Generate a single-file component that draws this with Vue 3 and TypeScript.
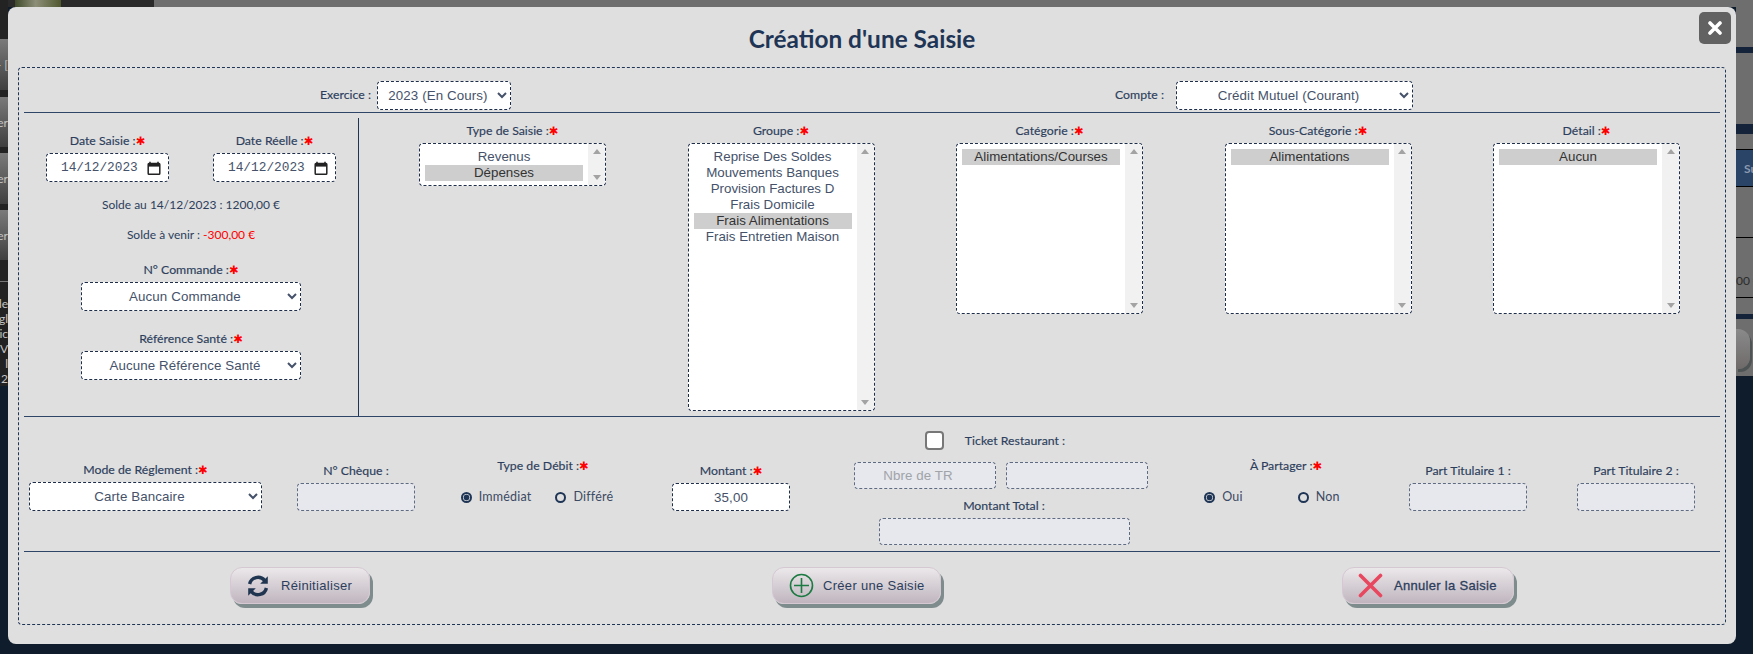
<script setup lang="ts">
interface ListBox {
  label: string;
  size: string;
  items: string[];
  selected: string;
}

const lists: ListBox[] = [
  { label: 'Type de Saisie :', size: 'small', items: ['Revenus', 'Dépenses'], selected: 'Dépenses' },
  {
    label: 'Groupe :',
    size: 'large',
    items: [
      'Reprise Des Soldes',
      'Mouvements Banques',
      'Provision Factures D',
      'Frais Domicile',
      'Frais Alimentations',
      'Frais Entretien Maison',
    ],
    selected: 'Frais Alimentations',
  },
  { label: 'Catégorie :', size: 'medium', items: ['Alimentations/Courses'], selected: 'Alimentations/Courses' },
  { label: 'Sous-Catégorie :', size: 'medium', items: ['Alimentations'], selected: 'Alimentations' },
  { label: 'Détail :', size: 'medium', items: ['Aucun'], selected: 'Aucun' },
];

const dates = ['Date Saisie :', 'Date Réelle :'];
</script>

<template>
  <div class="page">
    <div class="strip-left">
      <div class="sl-dark h39"></div>
      <div class="sl-grad h51"><span>- [</span></div>
      <div class="sl-dark h7"></div>
      <div class="sl-grad h50"><span>er</span></div>
      <div class="sl-dark h6"></div>
      <div class="sl-grad h51"><span>er</span></div>
      <div class="sl-dark h6"></div>
      <div class="sl-grad h50"><span>er</span></div>
      <div class="sl-text">
        <span>de</span><span>gl</span><span>ic</span><span>V</span><span>l</span><span>2</span>
      </div>
    </div>

    <div class="strip-top">
      <div class="st-dark"><div class="st-photo"></div></div>
      <div class="st-gray"></div>
    </div>

    <div class="strip-right">
      <div class="sr-gray h47"></div>
      <div class="sr-navy h6"></div>
      <div class="sr-gray h71"></div>
      <div class="sr-navy h10"></div>
      <div class="sr-gray h15"></div>
      <div class="sr-blue"><span>Su</span></div>
      <div class="sr-gray h50 line-bottom"></div>
      <div class="sr-gray sr-amount line-bottom"><span>00 €</span></div>
      <div class="sr-gray h16"></div>
      <div class="sr-navy h5"></div>
      <div class="sr-gray sr-btn-row"><div class="sr-btn"></div></div>
    </div>

    <div class="modal">
      <button class="close-button" type="button" aria-label="Fermer">
        <svg width="14" height="14" viewBox="0 0 14 14">
          <path d="M2 2 12 12M12 2 2 12" fill="none" stroke="#fff" stroke-width="3.6" stroke-linecap="round" />
        </svg>
      </button>
      <h1 class="title">Création d'une Saisie</h1>

      <form class="frame" @submit.prevent>
        <div class="row-top">
          <div class="inline-field exercice">
            <label>Exercice :</label>
            <select class="ctl sel-exercice">
              <option>2023 (En Cours)</option>
            </select>
          </div>
          <div class="inline-field compte">
            <label>Compte :</label>
            <select class="ctl sel-compte">
              <option>Crédit Mutuel (Courant)</option>
            </select>
          </div>
        </div>

        <div class="row-middle">
          <div class="left-col">
            <div class="dates">
              <div v-for="d in dates" :key="d" class="field">
                <label>{{ d }}<i class="req">✱</i></label>
                <div class="ctl date-input">
                  <span>14/12/2023</span>
                  <svg width="14" height="14" viewBox="0 0 14 14">
                    <path
                      d="M3 .8v2M11 .8v2M2 2.6h10a.8.8 0 0 1 .8.8v9a.8.8 0 0 1-.8.8H2a.8.8 0 0 1-.8-.8v-9a.8.8 0 0 1 .8-.8Z"
                      fill="none"
                      stroke="#222"
                      stroke-width="1.5"
                    />
                    <path d="M1.2 3h11.6v2.6H1.2z" fill="#222" />
                  </svg>
                </div>
              </div>
            </div>
            <p class="solde solde-date">Solde au 14/12/2023 : 1200,00 €</p>
            <p class="solde solde-venir">Solde à venir : <span class="negative">-300,00 €</span></p>
            <div class="field commande">
              <label>N° Commande :<i class="req">✱</i></label>
              <select class="ctl sel-left">
                <option>Aucun Commande</option>
              </select>
            </div>
            <div class="field reference">
              <label>Référence Santé :<i class="req">✱</i></label>
              <select class="ctl sel-left">
                <option>Aucune Référence Santé</option>
              </select>
            </div>
          </div>

          <div class="lists">
            <div v-for="list in lists" :key="list.label" class="field">
              <label class="list-label">{{ list.label }}<i class="req">✱</i></label>
              <div class="listbox" :class="list.size">
                <ul>
                  <li v-for="item in list.items" :key="item" :class="{ selected: item === list.selected }">
                    {{ item }}
                  </li>
                </ul>
                <div class="scrollbar">
                  <span class="arrow up"></span>
                  <span class="arrow down"></span>
                </div>
              </div>
            </div>
          </div>
        </div>

        <div class="row-bottom">
          <div class="field mode">
            <label>Mode de Réglement :<i class="req">✱</i></label>
            <select class="ctl sel-mode">
              <option>Carte Bancaire</option>
            </select>
          </div>
          <div class="field cheque">
            <label>N° Chèque :</label>
            <input class="ctl text-input off" type="text" disabled />
          </div>
          <div class="field debit">
            <label>Type de Débit :<i class="req">✱</i></label>
            <div class="radios">
              <label class="radio"><input type="radio" name="debit" checked />Immédiat</label>
              <label class="radio"><input type="radio" name="debit" />Différé</label>
            </div>
          </div>
          <div class="field montant">
            <label>Montant :<i class="req">✱</i></label>
            <input class="ctl text-input" type="text" value="35,00" />
          </div>
          <div class="ticket">
            <div class="ticket-head">
              <input class="check" type="checkbox" />
              <label>Ticket Restaurant :</label>
            </div>
            <div class="ticket-inputs">
              <input class="ctl text-input off nbre" type="text" placeholder="Nbre de TR" disabled />
              <input class="ctl text-input off" type="text" disabled />
            </div>
            <label class="total-label">Montant Total :</label>
            <input class="ctl text-input off total" type="text" disabled />
          </div>
          <div class="field partager">
            <label>À Partager :<i class="req">✱</i></label>
            <div class="radios">
              <label class="radio"><input type="radio" name="partage" checked />Oui</label>
              <label class="radio"><input type="radio" name="partage" />Non</label>
            </div>
          </div>
          <div class="field part part-1">
            <label>Part Titulaire 1 :</label>
            <input class="ctl text-input off" type="text" disabled />
          </div>
          <div class="field part part-2">
            <label>Part Titulaire 2 :</label>
            <input class="ctl text-input off" type="text" disabled />
          </div>
        </div>

        <div class="row-actions">
          <button class="action reset" type="button">
            <svg width="26" height="26" viewBox="0 0 26 26">
              <path
                d="M4.6 11A8.6 8.6 0 0 1 19.6 7.4M21.4 15A8.6 8.6 0 0 1 6.4 18.6"
                fill="none"
                stroke="#1f3550"
                stroke-width="3.4"
              />
              <path d="M22.8 3.2v7.6h-7.6zM3.2 22.8v-7.6h7.6z" fill="#1f3550" />
            </svg>
            <span>Réinitialiser</span>
          </button>
          <button class="action create" type="button">
            <svg width="25" height="25" viewBox="0 0 25 25">
              <circle cx="12.5" cy="12.5" r="11" fill="none" stroke="#1c7a43" stroke-width="1.6" />
              <path d="M12.5 5v15M5 12.5h15" fill="none" stroke="#1c7a43" stroke-width="1.6" />
            </svg>
            <span>Créer une Saisie</span>
          </button>
          <button class="action cancel" type="button">
            <svg width="25" height="25" viewBox="0 0 25 25">
              <path d="M2.5 2.5 22.5 22.5M22.5 2.5 2.5 22.5" fill="none" stroke="#e8485f" stroke-width="3.6" stroke-linecap="round" />
            </svg>
            <span>Annuler la Saisie</span>
          </button>
        </div>
      </form>
    </div>
  </div>
</template>

<style>
html,
body {
  margin: 0;
  background: #0f1c2c;
}
</style>

<style scoped>
.page {
  position: relative;
  display: flex;
  width: 1753px;
  height: 654px;
  overflow: hidden;
  background: #0f1c2c;
  font-family: Lato, 'Liberation Sans', sans-serif;
}

/* what shows round the modal */
.strip-left {
  width: 8px;
  display: flex;
  flex-direction: column;
  flex: none;
  overflow: hidden;
  font-size: 12px;
  color: #c4c4c4;
}
.strip-top {
  flex: 1;
  display: flex;
  height: 7px;
}
.st-dark {
  width: 139px;
  background: #2a2a2a;
  padding-left: 7px;
}
.st-photo {
  width: 46px;
  height: 7px;
  background: linear-gradient(90deg, #3f4a2b, #8d8f78 45%, #50582f);
}
.st-gray {
  flex: 1;
  background: #6e6e6e;
}
.strip-right {
  width: 17px;
  flex: none;
  display: flex;
  flex-direction: column;
  font-size: 12px;
  overflow: hidden;
}
.h5 { height: 5px; }
.h6 { height: 6px; }
.h7 { height: 7px; }
.h10 { height: 10px; }
.h15 { height: 15px; }
.h16 { height: 16px; }
.h39 { height: 39px; }
.h47 { height: 47px; }
.h50 { height: 50px; }
.h51 { height: 51px; }
.h71 { height: 71px; }
.sl-dark {
  background: #232323;
}
.sl-grad {
  display: flex;
  align-items: center;
  justify-content: flex-end;
  white-space: nowrap;
  background: linear-gradient(#7a7a7a, #3f3f3f);
}
.sl-text {
  height: 149px;
  padding-top: 36px;
  box-sizing: border-box;
  display: flex;
  flex-direction: column;
  align-items: flex-end;
  line-height: 15px;
  white-space: nowrap;
  background: linear-gradient(#232323 21px, #777 21px, #777 22px, #222 22px, #222 126px, #0f1c2c 126px);
}
.sr-gray {
  background: #6e6e6e;
}
.sr-navy {
  background: #14233a;
}
.sr-blue {
  height: 36px;
  display: flex;
  align-items: center;
  padding-left: 8px;
  background: #2a4468;
  border-top: 1px solid #000;
  border-bottom: 1px solid #000;
  font-weight: 700;
  color: #8c9ab0;
}
.line-bottom {
  border-bottom: 1px solid #000;
}
.sr-amount {
  height: 60px;
  padding-top: 35px;
  box-sizing: border-box;
  white-space: nowrap;
  color: #2b2b2b;
}
.sr-btn-row {
  height: 57px;
  padding-top: 10px;
  box-sizing: border-box;
}
.sr-btn {
  width: 14px;
  height: 40px;
  border-radius: 0 12px 12px 0;
  background: linear-gradient(#8a8a8a, #6f6a6a);
  box-shadow: 2px 3px 0 #4e5353;
}

.modal {
  position: absolute;
  left: 8px;
  top: 7px;
  width: 1728px;
  height: 637px;
  box-sizing: border-box;
  padding: 0 10px 19px;
  border-radius: 8px;
  background: #dfdfdf;
  color: #2c3e5c;
}
.close-button {
  position: absolute;
  right: 5px;
  top: 5px;
  width: 32px;
  height: 32px;
  padding: 0;
  display: flex;
  align-items: center;
  justify-content: center;
  border: 0;
  border-radius: 5px;
  background: #626262;
}
.title {
  margin: 0;
  height: 60px;
  box-sizing: border-box;
  padding: 16px 20px 0 0;
  text-align: center;
  font-size: 24.4px;
  line-height: 32px;
  font-weight: 700;
  color: #1f3556;
}
.frame {
  height: 558px;
  box-sizing: border-box;
  padding: 0 5px;
  border: 1px dashed #1f3556;
  border-radius: 4px;
}

label {
  font-size: 12.3px;
  line-height: 14px;
  color: #2c3e5c;
  white-space: nowrap;
  -webkit-text-stroke: 0.15px #2c3e5c;
}
.req {
  font-family: 'DejaVu Sans', sans-serif;
  font-style: normal;
  font-size: 11.5px;
  line-height: 0;
  font-weight: 700;
  color: #f00;
  -webkit-text-stroke: 0;
}
.field {
  display: flex;
  flex-direction: column;
  align-items: center;
}

.ctl {
  box-sizing: border-box;
  height: 29px;
  border: 1px dashed #1d2d4a;
  border-radius: 4px;
  background: #fff;
  font-family: 'Liberation Sans', sans-serif;
  font-size: 13.33px;
  letter-spacing: 0.1px;
  color: #45526a;
  text-align: center;
  text-align-last: center;
  outline: none;
}

.row-top {
  display: flex;
  align-items: center;
  height: 45px;
  box-sizing: border-box;
  padding-top: 10px;
  border-bottom: 1px solid #2f4567;
}
.inline-field {
  display: flex;
  align-items: center;
}
.exercice {
  margin-left: 296px;
  gap: 6px;
}
.compte {
  margin-left: 604px;
  gap: 12px;
}
.sel-exercice {
  width: 134px;
}
.sel-compte {
  width: 237px;
}

.row-middle {
  display: flex;
  height: 304px;
  box-sizing: border-box;
  border-bottom: 1px solid #2f4567;
}
.left-col {
  width: 335px;
  margin-top: 5px;
  box-sizing: border-box;
  border-right: 1px solid #1f3556;
  display: flex;
  flex-direction: column;
  align-items: center;
  padding-top: 16px;
}
.dates {
  display: flex;
  gap: 44px;
}
.dates .field {
  gap: 5px;
}
.date-input {
  width: 123px;
  display: flex;
  align-items: center;
  justify-content: space-between;
  padding: 0 7px 0 14px;
  font-family: 'Liberation Mono', monospace;
  font-size: 12.8px;
  letter-spacing: 0;
}
.solde {
  margin: 0;
  font-size: 12px;
  line-height: 14px;
}
.solde-date {
  margin-top: 16px;
}
.solde-venir {
  margin-top: 16px;
}
.negative {
  color: #f00;
}
.commande {
  margin-top: 21px;
  gap: 5px;
}
.reference {
  margin-top: 21px;
  gap: 5px;
}
.sel-left {
  width: 220px;
}

.lists {
  flex: 1;
  display: flex;
  justify-content: space-between;
  align-items: flex-start;
  padding: 11px 40px 0 60px;
}
.list-label {
  margin-bottom: 5px;
}
.listbox {
  box-sizing: border-box;
  width: 187px;
  display: flex;
  border: 1px dashed #1d2d4a;
  border-radius: 4px;
  background: #fff;
}
.listbox.small {
  height: 43px;
}
.listbox.medium {
  height: 171px;
}
.listbox.large {
  height: 268px;
}
.listbox ul {
  flex: 1;
  margin: 0;
  padding: 5px;
  list-style: none;
  font-family: 'Liberation Sans', sans-serif;
  font-size: 13.33px;
  line-height: 16px;
  text-align: center;
  color: #45526a;
}
.listbox li.selected {
  background: #cecece;
  color: #333;
}
.scrollbar {
  width: 17px;
  display: flex;
  flex-direction: column;
  justify-content: space-between;
  align-items: center;
  padding: 5px 0;
  box-sizing: border-box;
  background: #f1f1f1;
  border-radius: 0 4px 4px 0;
}
.arrow {
  width: 0;
  height: 0;
  border-left: 4px solid transparent;
  border-right: 4px solid transparent;
}
.arrow.up {
  border-bottom: 5px solid #a3a3a3;
}
.arrow.down {
  border-top: 5px solid #a3a3a3;
}

.row-bottom {
  display: flex;
  align-items: flex-start;
  height: 135px;
  box-sizing: border-box;
  padding-left: 5px;
  border-bottom: 1px solid #2f4567;
}
.text-input {
  width: 118px;
  height: 28px;
  padding: 0;
}
.text-input.off {
  background: #e6e8ee;
  border-color: #5f6b80;
}
.text-input::placeholder {
  color: #a0a3a8;
  opacity: 1;
}
.mode {
  width: 233px;
  margin-top: 46px;
  gap: 5px;
}
.sel-mode {
  width: 233px;
}
.cheque {
  margin-left: 35px;
  margin-top: 47px;
  gap: 5px;
}
.debit {
  width: 170px;
  margin-left: 43px;
  margin-top: 42px;
}
.radios {
  display: flex;
  margin-top: 17px;
}
.radio {
  display: flex;
  align-items: center;
  gap: 7px;
  font-size: 12.5px;
  letter-spacing: 0.2px;
  color: #3c4a64;
  -webkit-text-stroke: 0;
}
.debit .radios {
  gap: 24px;
  margin-right: 12px;
}
.radio input {
  appearance: none;
  box-sizing: border-box;
  width: 11px;
  height: 11px;
  margin: 0;
  border: 2px solid #1f3556;
  border-radius: 50%;
  background: transparent;
}
.radio input:checked {
  background: radial-gradient(circle, #1f3556 0 2.6px, transparent 3.2px);
}
.montant {
  margin-left: 44px;
  margin-top: 47px;
  gap: 5px;
}
.ticket {
  margin-left: 64px;
  width: 294px;
  display: flex;
  flex-direction: column;
  align-items: center;
}
.ticket-head {
  display: flex;
  align-items: center;
  gap: 21px;
  height: 19px;
  margin-top: 14px;
  margin-right: 12px;
}
.check {
  appearance: none;
  box-sizing: border-box;
  width: 19px;
  height: 19px;
  margin: 0;
  border: 2px solid #777;
  border-radius: 4px;
  background: #fff;
}
.ticket-inputs {
  display: flex;
  gap: 10px;
  margin-top: 12px;
}
.ticket-inputs .text-input {
  width: 142px;
  height: 27px;
}
.ticket-inputs .nbre {
  padding-right: 14px;
}
.total-label {
  margin-top: 10px;
  margin-left: 6px;
}
.total {
  width: 251px;
  height: 27px;
  margin-top: 5px;
  margin-left: 6px;
}
.partager {
  width: 172px;
  margin-left: 52px;
  margin-top: 42px;
}
.partager .radios {
  gap: 55px;
  margin-right: 28px;
}
.part {
  margin-top: 47px;
  gap: 5px;
}
.part-1 {
  margin-left: 37px;
}
.part-2 {
  margin-left: 50px;
}

.row-actions {
  display: flex;
  align-items: flex-start;
  padding: 15px 0 0 206px;
}
.action {
  box-sizing: border-box;
  height: 37px;
  display: flex;
  align-items: center;
  padding: 0;
  border: 1px solid #d5c8d2;
  border-radius: 12px;
  background: linear-gradient(#ebe8ea, #c0b5bf);
  box-shadow: 3px 4px 0 #7f8c8d;
  font-family: 'Liberation Sans', sans-serif;
  font-size: 13px;
  letter-spacing: 0.3px;
  color: #2c3e5c;
}
.reset {
  width: 140px;
  padding-left: 14px;
  gap: 10px;
}
.create {
  width: 169px;
  margin-left: 402px;
  padding-left: 16px;
  gap: 9px;
}
.cancel {
  width: 172px;
  margin-left: 401px;
  padding-left: 15px;
  gap: 11px;
  -webkit-text-stroke: 0.3px #2c3e5c;
}
</style>
